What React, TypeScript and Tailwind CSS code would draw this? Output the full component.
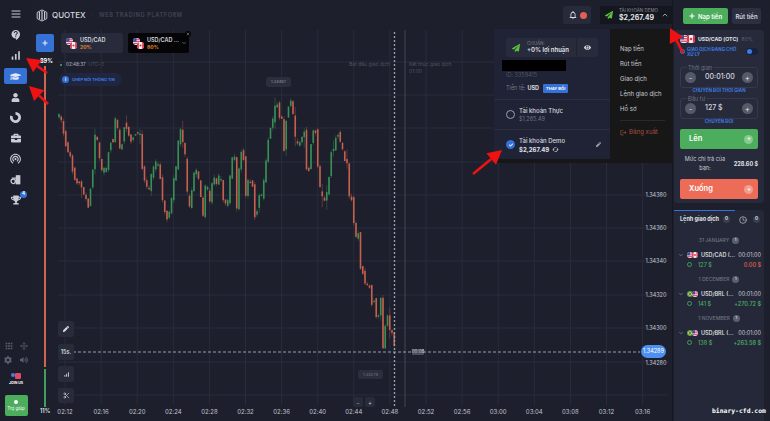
import React from "react";
import { FaGraduationCap, FaUser, FaBriefcase, FaTrophy, FaPen, FaPlus, FaArrowUp, FaArrowDown, FaEye, FaCheck, FaCog, FaVolumeUp, FaPaperPlane } from "react-icons/fa";
import { MdWifiTethering, MdSignalCellularAlt, MdContactSupport, MdOutlineApps, MdCached, MdLogout, MdNotificationsNone } from "react-icons/md";
import { LuChevronUp, LuChevronDown, LuClock, LuX, LuScissors, LuMenu, LuMove } from "react-icons/lu";

const z8: number[][] = [[28,80],[35,115],[45,170],[60,215],[70,265],[80,300],[85,280],[95,310],[110,350],[115,365],[128,255],[135,150],[145,180],[150,240],[160,270],[165,235],[172,270],[178,155],[188,180],[195,100],[205,140],[212,230],[218,150],[225,105],[235,150],[245,170],[255,140],[270,150],[275,240],[285,290],[295,325],[305,265],[320,225],[330,270],[340,370],[350,400],[358,380],[365,340],[372,275],[380,240],[388,125],[398,165],[405,215],[412,330],[420,380],[428,280],[437,250],[445,280],[460,400],[468,270],[478,365],[488,275],[500,295],[510,265],[522,360],[535,350]];
const z9: number[][] = [[15,275],[20,225],[30,215],[35,375],[45,200],[55,205],[60,340],[70,285],[82,295],[92,430],[100,320],[110,335],[118,280],[125,205],[132,150],[140,100],[147,115],[152,35],[165,100],[172,105],[178,215],[185,80],[195,40],[205,90],[213,190],[225,170],[238,140],[245,255],[252,260],[260,140],[272,140],[280,265],[288,340],[302,345],[312,280],[316,195],[328,195],[334,145],[342,145],[350,190],[360,230],[368,230],[373,345],[382,340],[385,400]];
const z10: number[][] = [[48,85],[55,70],[62,180],[70,190],[78,230],[90,230],[95,280],[105,260],[108,320],[118,315],[125,230],[128,425],[138,325],[140,300],[150,365],[158,370],[165,425]];
const pts: number[][] = [
  ...z8.map(([a, b]) => [50 + a / 3, 85 + b / 3]),
  ...z9.map(([a, b]) => [225 + a / 3, 85 + b / 3]),
  ...z10.map(([a, b]) => [340 + a / 3, 210 + b / 3]),
];
function yAt(x: number) {
  if (x <= pts[0][0]) return pts[0][1] + 4;
  for (let i = 0; i < pts.length - 1; i++) {
    if (x >= pts[i][0] && x <= pts[i + 1][0]) {
      const t = (x - pts[i][0]) / (pts[i + 1][0] - pts[i][0] || 1);
      return pts[i][1] + t * (pts[i + 1][1] - pts[i][1]);
    }
  }
  return pts[pts.length - 1][1];
}
const rnd = (i: number) => {
  const s = Math.sin(i * 12.9898) * 43758.5453;
  return s - Math.floor(s);
};
const candles: { x: number; a: number; b: number; hi: number; lo: number; up: boolean }[] = [];
for (let i = 0, x = 59; x <= 395; i++, x += 2.25) {
  const j = x > 380 ? 0 : (rnd(i + 7) - 0.5) * 5;
  const a = yAt(x - 2.25) - j;
  const b = yAt(x) + j;
  const big = rnd(i) > 0.84;
  candles.push({
    x,
    a: Math.min(a, b),
    b: Math.max(Math.max(a, b), Math.min(a, b) + 1.5),
    hi: Math.min(a, b) - rnd(i + 50) * (big ? 10 : 3),
    lo: Math.max(a, b) + rnd(i + 99) * (big ? 11 : 3),
    up: b < a,
  });
}

const times = ["02:12","02:16","02:20","02:24","02:28","02:32","02:36","02:40","02:44","02:48","02:52","02:56","03:00","03:04","03:08","03:12","03:16"];
const prices: [string, number][] = [["1.34380",195],["1.34360",228],["1.34340",261],["1.34320",295],["1.34300",328],["1.34280",363]];

function Flag({ c, s = 8 }: { c: "us" | "ca" | "br"; s?: number }) {
  return (
    <svg width={s} height={s} viewBox="0 0 10 10" className="shrink-0 rounded-[3px]">
      {c === "us" && (
        <>
          <rect width="10" height="10" fill="#eef" />
          <rect y="1" width="10" height="1.5" fill="#d8394b" />
          <rect y="4" width="10" height="1.5" fill="#d8394b" />
          <rect y="7" width="10" height="1.5" fill="#d8394b" />
          <rect width="5" height="5.5" fill="#3e4fa0" />
        </>
      )}
      {c === "ca" && (
        <>
          <rect width="10" height="10" fill="#f4f4f4" />
          <rect width="2.6" height="10" fill="#e0324a" />
          <rect x="7.4" width="2.6" height="10" fill="#e0324a" />
          <circle cx="5" cy="5" r="1.6" fill="#e0324a" />
        </>
      )}
      {c === "br" && (
        <>
          <rect width="10" height="10" fill="#4ba64a" />
          <path d="M5 1.5 9 5 5 8.5 1 5z" fill="#f4d43b" />
          <circle cx="5" cy="5" r="1.7" fill="#33508f" />
        </>
      )}
    </svg>
  );
}

function Pair({ a, b, s = 8 }: { a: "us" | "ca" | "br"; b: "us" | "ca" | "br"; s?: number }) {
  return (
    <span className="flex shrink-0 items-center">
      <Flag c={a} s={s} />
      <span className="-ml-[1px]">
        <Flag c={b} s={s} />
      </span>
    </span>
  );
}

function DiagPair() {
  return (
    <span className="flex shrink-0 items-center">
      <span className="-translate-y-[2px]"><Flag c="us" s={7} /></span>
      <span className="-ml-[3px] translate-y-[2px]"><Flag c="ca" s={7} /></span>
    </span>
  );
}

function SideIcon({ children }: { children: React.ReactNode }) {
  return <div className="flex h-[20.5px] w-[31px] items-center justify-center text-[#c9ccd4]">{children}</div>;
}

function Order({ a, b, name, stake, result, loss }: { a: "us" | "br"; b: "us" | "ca"; name: string; stake: string; result: string; loss?: boolean }) {
  return (
    <div className="flex flex-col gap-[4px] whitespace-nowrap pl-[2px] pr-[1px]">
      <div className="flex items-center text-[5.5px] leading-[6px]">
        <LuChevronDown className="mr-[3px] shrink-0 text-[#9ba0ad]" size={6} />
        <Pair a={a} b={b} s={6} />
        <span className="ml-[3px] font-semibold text-[#d7d9df]">{name}</span>
        <span className="ml-auto text-[#c9ccd4]">00:01:00</span>
      </div>
      <div className="flex items-center pl-[9px] text-[5.5px] leading-[6px]">
        <span className="mr-[6px] flex h-[5px] w-[5px] items-center justify-center rounded-full border border-[#3f9e5e]" />
        <span className="font-medium text-[#49a864]">{stake}</span>
        <span className={`ml-auto font-semibold ${loss ? "text-[#dc5a4a]" : "text-[#49a864]"}`}>{result}</span>
      </div>
    </div>
  );
}

function DateRow({ label }: { label: string }) {
  return (
    <div className="flex h-[6px] items-center justify-center gap-[3px] text-[5px] leading-[6px] text-[#6f7484]">
      <span className="font-medium">{label}</span>
      <span className="flex h-[7px] w-[7px] items-center justify-center rounded-full bg-[#5a5f6f] text-[4px] text-white">1</span>
    </div>
  );
}

function Stepper({ label, value, hint, valueClass }: { label: string; value: string; hint: string; valueClass: string }) {
  return (
    <div className="flex flex-col">
      <div className="relative flex h-[21px] items-center rounded-[3px] border border-[#353949] px-[4px]">
        <span className="absolute -top-[3px] left-[6px] bg-[#262a3b] px-[1px] text-[5.5px] leading-[6px] text-[#6f7484]">{label}</span>
        <span className="flex h-[11px] w-[11px] items-center justify-center rounded-full bg-[#565a68] text-[8px] leading-none text-[#c9ccd4]">-</span>
        <span className={`text-[7px] font-medium text-[#d7d9df] ${valueClass}`}>{value}</span>
        <span className="ml-auto flex h-[11px] w-[11px] items-center justify-center rounded-full bg-[#565a68] text-[8px] leading-none text-[#e3e5ea]">+</span>
      </div>
      <div className="h-[10px] text-center text-[4.5px] font-bold leading-[6px] text-[#3d7be0]">{hint}</div>
    </div>
  );
}

function Arrow({ x1, y1, x2, y2 }: { x1: number; y1: number; x2: number; y2: number }) {
  const ang = Math.atan2(y2 - y1, x2 - x1);
  const L = 14;
  const W = 7.5;
  const bx = x2 - Math.cos(ang) * L;
  const by = y2 - Math.sin(ang) * L;
  const px = -Math.sin(ang) * W;
  const py = Math.cos(ang) * W;
  return (
    <g>
      <line x1={x1} y1={y1} x2={bx} y2={by} stroke="#ee1212" strokeWidth="2.6" />
      <polygon points={`${x2},${y2} ${bx + px},${by + py} ${bx - px},${by - py}`} fill="#ee1212" />
    </g>
  );
}

function Chart() {
  return (
    <svg className="absolute inset-0 h-full w-full" viewBox="32 30 640 391">
      {times.map((_, i) => (
        <line key={i} x1={65 + i * 36.1} x2={65 + i * 36.1} y1={30} y2={405} stroke="#292c3a" strokeWidth="1" />
      ))}
      {[62, 95, 128, 162, 195, 228, 261, 295, 328, 362, 395].map((y) => (
        <line key={y} x1={58} x2={668} y1={y} y2={y} stroke="#292c3a" strokeWidth="1" />
      ))}
      {candles.map((c, i) => (
        <g key={i}>
          <line x1={c.x} x2={c.x} y1={c.hi} y2={c.lo} stroke={c.up ? "#3a8f55" : "#b85a49"} strokeOpacity="0.5" strokeWidth="0.8" />
          <rect x={c.x - 0.8} y={c.a} width="1.6" height={c.b - c.a} fill={c.up ? "#3a8f55" : "#c4604d"} />
        </g>
      ))}
      <line x1="394.5" x2="394.5" y1="28" y2="407" stroke="#9a9da8" strokeWidth="1.4" strokeDasharray="2 2" />
      <line x1="405" x2="405" y1="28" y2="407" stroke="#434653" strokeWidth="1" />
      <line x1="58" x2="640" y1="352" y2="352" stroke="#a8abb5" strokeWidth="0.9" strokeDasharray="3 2" />
      {times.map((t, i) => (
        <text key={t} x={65 + i * 36.1} y={414} textAnchor="middle" fontSize="6" fontFamily="Inter, sans-serif" fill="#c2c5cd">{t}</text>
      ))}
      {prices.map(([p, y]) => (
        <text key={p} x={656} y={y + 2} textAnchor="middle" fontSize="5.5" fontFamily="Inter, sans-serif" fill="#c2c5cd">{p}</text>
      ))}
    </svg>
  );
}

export default function App() {
  return (
    <div className="relative flex h-[421px] w-[770px] overflow-hidden bg-[#1d1f2d] font-['Inter',sans-serif] text-[#d7d9df]">
      {/* sidebar */}
      <aside className="flex w-[32px] shrink-0 flex-col bg-[#1c1e2b] pt-[4px]">
        <SideIcon><LuMenu size={12} /></SideIcon>
        <SideIcon><MdContactSupport size={12} /></SideIcon>
        <SideIcon><MdSignalCellularAlt size={13} /></SideIcon>
        <div className="ml-[4px] mt-[2.5px] flex h-[16px] w-[23px] items-center justify-center rounded-[2px] bg-[#3672d6] text-[#e3e8f5]">
          <FaGraduationCap size={11} />
        </div>
        <div className="h-[3px]" />
        <SideIcon><FaUser size={9} /></SideIcon>
        <SideIcon>
          <svg width="11" height="11" viewBox="0 0 12 12"><path d="M6 1.5a4.5 4.5 0 1 1-4.2 2.9" fill="none" stroke="currentColor" strokeWidth="3" /></svg>
        </SideIcon>
        <SideIcon><FaBriefcase size={10} /></SideIcon>
        <SideIcon><MdWifiTethering size={13} /></SideIcon>
        <SideIcon>
          <svg width="11" height="11" viewBox="0 0 12 12" fill="none" stroke="currentColor" strokeWidth="1.4">
            <circle cx="3.5" cy="8" r="2.4" />
            <rect x="7" y="2" width="3.6" height="8.6" fill="currentColor" />
            <path d="M2 4.5h5" />
          </svg>
        </SideIcon>
        <div className="relative">
          <SideIcon><FaTrophy size={10} /></SideIcon>
          <span className="absolute right-[5px] top-[1px] flex h-[7px] w-[7px] items-center justify-center rounded-full bg-[#3672d6] text-[4.5px] font-bold text-white">4</span>
        </div>
        <div className="mt-auto flex flex-col items-center gap-[5px] pb-[5px]">
          <div className="flex w-[24px] items-center justify-between text-[#5c6070]">
            <MdOutlineApps size={10} />
            <LuMove size={8} />
          </div>
          <div className="flex w-[24px] items-center justify-between text-[#5c6070]">
            <FaCog size={8} />
            <FaVolumeUp size={8} />
          </div>
          <div className="flex flex-col items-center pt-[4px]">
            <span className="flex">
              <span className="h-[4px] w-[4px] rounded-full bg-[#4a7be0]" />
              <span className="h-[6px] w-[6px] rounded-[1px] bg-[#e0486a]" />
            </span>
            <span className="mt-[2px] text-[3.5px] font-bold leading-[4px] text-white">JOIN US</span>
          </div>
          <div className="mt-[5px] flex h-[21px] w-[23px] flex-col items-center justify-center rounded-[2px] bg-[#4cad5c] text-white">
            <span className="h-[4px] w-[4px] rounded-full bg-white" />
            <span className="mt-[2px] text-[4.5px] leading-[5px]">Trợ giúp</span>
          </div>
        </div>
      </aside>

      <div className="flex min-w-0 flex-1 flex-col">
        {/* header */}
        <header className="flex h-[30px] shrink-0 items-center">
          <svg width="12" height="13" viewBox="0 0 14 14" className="ml-[4px] shrink-0" fill="#c9ccd4">
            <path d="M7 0.5 12.6 3.4V10.6L7 13.5 1.4 10.6V3.4Z" fill="none" stroke="#c9ccd4" strokeWidth="1.1" />
            <path d="M4 3v8M7 1.5v11M10 3v8" stroke="#c9ccd4" strokeWidth="1.4" />
          </svg>
          <span className="ml-[4px] text-[8px] font-medium text-[#d7d9df]">QUOTEX</span>
          <span className="ml-[6px] text-[5px] text-[#3d404e]">-</span>
          <span className="ml-[5px] text-[5.5px] font-bold tracking-[0.65px] text-[#3f4250]">WEB TRADING PLATFORM</span>
          <div className="ml-auto flex h-[18px] w-[28px] items-center justify-center gap-[2px] rounded-[2px] bg-[#272a3a]">
            <MdNotificationsNone size={10} />
            <span className="h-[7px] w-[7px] rounded-full bg-[#e2604e]" />
          </div>
          <div className="ml-[9px] flex h-[18px] w-[72px] items-center bg-[#15171f] pl-[5px]">
            <FaPaperPlane size={8} className="text-[#5cc23d]" />
            <div className="ml-[6px] flex flex-col">
              <span className="text-[4.5px] leading-[6px] text-[#8b8f9c]">TÀI KHOẢN DEMO</span>
              <span className="text-[7px] font-bold leading-[8px] text-[#e3e5ea]">$2,267.49</span>
            </div>
            <LuChevronUp size={8} className="ml-auto mr-[3px] text-[#d7d9df]" />
          </div>
        </header>
        {/* chart */}
        <main className="relative min-h-0 flex-1 whitespace-nowrap">
          <Chart />
          <div className="absolute left-[8px] top-[28px] text-[5.5px] font-bold leading-[6px] text-white">89%</div>
          <div className="absolute left-[8px] top-[378px] text-[5.5px] font-bold leading-[6px] text-[#d7d9df]">11%</div>
          <div className="absolute left-[12px] top-[36px] h-[301px] w-[2px] bg-[#cf644f]" />
          <div className="absolute left-[12px] top-[339px] h-[38px] w-[2px] bg-[#3f9e5e]" />
          <div className="absolute left-[4px] top-[4px] flex h-[18px] w-[18px] items-center justify-center rounded-[2px] bg-[#3672d6] text-[#e6ecf8]">
            <FaPlus size={6} />
          </div>
          <div className="absolute left-[29px] top-[3px] flex h-[20px] w-[62px] items-center rounded-[2px] bg-[#282b3c] pl-[5px]">
            <DiagPair />
            <div className="ml-[3px] flex flex-col">
              <span className="text-[5.5px] font-semibold leading-[7px] text-[#d7d9df]">USD/CAD</span>
              <span className="text-[5px] font-bold leading-[6px] text-[#e08a2a]">20%</span>
            </div>
          </div>
          <div className="absolute left-[96px] top-[3px] flex h-[20px] w-[61px] items-center rounded-[2px] bg-[#050507] pl-[5px]">
            <DiagPair />
            <div className="ml-[3px] flex flex-col">
              <span className="text-[5.5px] font-semibold leading-[7px] text-[#d7d9df]">USD/CAD ...</span>
              <span className="text-[5px] font-bold leading-[6px] text-[#e08a2a]">80%</span>
            </div>
            <LuChevronDown size={6} className="ml-[2px] text-[#9ba0ad]" />
            <span className="absolute -right-[2px] -top-[2px] flex h-[6px] w-[6px] items-center justify-center rounded-full bg-[#050507] text-white">
              <LuX size={4} />
            </span>
          </div>
          <div className="absolute left-[28px] top-[32px] flex items-center gap-[3px] text-[4.5px] leading-[6px] text-[#8b8f9c]">
            <span className="h-[2px] w-[2px] rounded-full bg-[#4cad5c]" />
            <span className="ml-[1px] font-medium text-[#a2a6b2]">02:48:37</span>
            <span className="text-[#4f5362]">UTC+3</span>
          </div>
          <div className="absolute left-[27px] top-[43px] flex h-[13px] w-[63px] items-center rounded-full bg-[#20263f] pl-[3px]">
            <span className="flex h-[7px] w-[7px] items-center justify-center rounded-full bg-[#3672d6] text-[4px] font-bold text-white">i</span>
            <span className="ml-[3px] text-[4px] font-bold text-[#3d7be0]">GHÉP NỐI THÔNG TIN</span>
          </div>

          <div className="absolute left-[26px] top-[291px] flex h-[16px] w-[16px] items-center justify-center rounded-[2px] bg-[#282b39] text-[#d7d9df]"><FaPen size={6} /></div>
          <div className="absolute left-[26px] top-[314px] flex h-[16px] w-[16px] items-center justify-center rounded-[2px] bg-[#282b39] text-[5.5px] font-semibold text-[#d7d9df]">15s.</div>
          <div className="absolute left-[26px] top-[336px] flex h-[16px] w-[16px] items-center justify-center rounded-[2px] bg-[#282b39] text-[#d7d9df]"><MdSignalCellularAlt size={7} /></div>
          <div className="absolute left-[26px] top-[358px] flex h-[15px] w-[16px] items-center justify-center rounded-[2px] bg-[#282b39] text-[#d7d9df]"><LuScissors size={7} /></div>

          <div className="absolute left-[234px] top-[47px] flex h-[10px] w-[25px] items-center justify-center rounded-[2px] bg-[#2b2e3d] text-[4px] text-[#9498a5]">1.34497</div>
          <div className="absolute left-[326px] top-[340px] flex h-[9px] w-[25px] items-center justify-center rounded-[2px] bg-[#2b2e3d] text-[4px] text-[#777b89]">1.34279</div>
          <div className="absolute left-[316px] top-[31px] w-[42px] text-right text-[5px] leading-[6px] text-[#4f5362]">Bắt đầu giao dịch</div>
          <div className="absolute left-[377px] top-[31px] text-[5px] leading-[7px] text-[#4f5362]">Kết thúc giao dịch<br />01:00</div>
          <div className="absolute left-[380px] top-[319px] flex h-[6px] w-[12px] items-center justify-center rounded-[1px] bg-[#4a4d5a] text-[4.5px] text-[#c9ccd4]">00:08</div>
          <div className="absolute left-[609px] top-[315px] flex h-[13px] w-[25px] items-center justify-center rounded-full bg-[#4d90f0] text-[5.5px] text-white">1.34289</div>
          <div className="absolute left-[321px] top-[367px] flex h-[10px] w-[10px] items-center justify-center rounded-[2px] bg-[#282b39] text-[6px] text-[#9498a5]">−</div>
          <div className="absolute left-[333px] top-[367px] flex h-[10px] w-[10px] items-center justify-center rounded-[2px] bg-[#282b39] text-[6px] text-[#c9ccd4]">+</div>
        </main>
      </div>

      {/* right column */}
      <aside className="flex w-[98px] shrink-0 flex-col border-l border-[#141620] pl-[1px] pr-[6px] pt-[8px]">
        <div className="flex h-[16px] shrink-0 gap-[4px] pl-[9px] pr-[3px]">
          <div className="flex w-[45px] items-center justify-center gap-[3px] rounded-[2px] bg-[#4cad5c] text-[6px] font-semibold text-white">
            <FaPlus size={6} />
            <span>Nạp tiền</span>
          </div>
          <div className="flex flex-1 items-center justify-center rounded-[2px] bg-[#2c2f40] text-[6px] font-semibold text-[#d7d9df]">Rút tiền</div>
        </div>
        <div className="mt-[6px] flex h-[173px] shrink-0 flex-col rounded-[3px] bg-[#262a3b] px-[6px] pt-[5px]">
          <div className="flex h-[8px] items-center whitespace-nowrap text-[5.2px] leading-[7px]">
            <Pair a="us" b="ca" s={8} />
            <span className="ml-[3px] font-bold text-[#e0e2e7]">USD/CAD (OTC)</span>
            <span className="ml-[3px] text-[#5d6170]">80%</span>
          </div>
          <div className="mt-[3px] flex h-[11px] items-center">
            <span className="mr-[2px] h-[5px] w-[5px] shrink-0 rounded-full border border-[#3d7be0]" />
            <span className="w-[56px] text-[4.5px] font-bold leading-[5px] text-[#3d7be0]">GIAO DỊCH ĐANG CHỜ XỬ LÝ</span>
            <span className="ml-auto flex h-[7px] w-[12px] items-center rounded-full bg-[#182040] pl-[0.5px]">
              <span className="h-[5px] w-[5px] rounded-full bg-[#3d7be0]" />
            </span>
          </div>
          <div className="mt-[10px] flex flex-col">
            <Stepper label="Thời gian" value="00:01:00" hint="CHUYỂN ĐỔI THỜI GIAN" valueClass="ml-[9px]" />
            <Stepper label="Đầu tư" value="127 $" hint="CHUYỂN ĐỔI" valueClass="ml-[9px]" />
          </div>
          <div className="flex h-[20px] shrink-0 items-center justify-between rounded-[2px] bg-[#4cad5c] pl-[9px] pr-[5px] text-[7.5px] font-semibold text-white">
            <span>Lên</span>
            <span className="flex h-[9px] w-[9px] items-center justify-center rounded-full bg-[#86c991]"><FaArrowUp size={4} /></span>
          </div>
          <div className="flex h-[30px] shrink-0 items-center justify-between text-[5.5px] leading-[9px]">
            <span className="w-[50px] text-center text-[#c9ccd4]">Mức chi trả của bạn:</span>
            <span className="whitespace-nowrap font-bold text-[#e0e2e7]">228.60 $</span>
          </div>
          <div className="flex h-[20px] shrink-0 items-center justify-between rounded-[2px] bg-[#ec6c58] pl-[9px] pr-[5px] text-[7.5px] font-semibold text-white">
            <span>Xuống</span>
            <span className="flex h-[9px] w-[9px] items-center justify-center rounded-full bg-[#f19c8d]"><FaArrowDown size={4} /></span>
          </div>
        </div>
        <div className="mt-[7px] flex min-h-0 flex-1 flex-col rounded-t-[3px] bg-[#242838]">
          <div className="h-[1px] w-[61px] bg-[#3672d6]" />
          <div className="flex h-[17px] items-center whitespace-nowrap pl-[6px] pr-[4px] text-[5.5px] font-bold">
            <span className="text-[#e0e2e7]">Lệnh giao dịch</span>
            <span className="ml-[4px] flex h-[7px] w-[7px] items-center justify-center rounded-full bg-[#3a3e4e] text-[4.5px]">0</span>
            <LuClock size={8} className="ml-auto text-[#c9ccd4]" />
            <span className="ml-[6px] flex h-[7px] w-[7px] items-center justify-center rounded-full bg-[#3a3e4e] text-[4.5px]">0</span>
          </div>
          <div className="mt-[9px] flex flex-col gap-[8.5px] px-[2px]">
            <DateRow label="31 JANUARY" />
            <Order a="us" b="ca" name="USD/CAD (..." stake="127 $" result="0.00 $" loss />
            <DateRow label="1 DECEMBER" />
            <Order a="br" b="us" name="USD/BRL (..." stake="141 $" result="+270.72 $" />
            <DateRow label="1 NOVEMBER" />
            <Order a="br" b="us" name="USD/BRL (..." stake="138 $" result="+263.58 $" />
          </div>
        </div>
      </aside>

      {/* account dropdown */}
      <div className="absolute left-[494px] top-[29px] flex h-[134px] w-[179px] whitespace-nowrap bg-[#171717]">
        <div className="mb-[4px] flex w-[116px] flex-col bg-[#1f2335]">
          <div className="mx-[12px] mt-[9px] flex h-[19px] shrink-0 gap-[1px]">
            <div className="flex flex-1 items-center rounded-l-[2px] bg-[#272b3c] pl-[6px]">
              <FaPaperPlane size={8} className="text-[#5cc23d]" />
              <div className="ml-[7px] flex flex-col">
                <span className="text-[4.5px] leading-[5px] text-[#7a7e8c]">CHUẨN:</span>
                <span className="text-[6px] font-semibold leading-[8px] text-[#e0e2e7]">+0% lợi nhuận</span>
              </div>
            </div>
            <div className="flex w-[21px] items-center justify-center rounded-r-[2px] bg-[#272b3c] text-[#d7d9df]"><FaEye size={7} /></div>
          </div>
          <div className="ml-[8px] mt-[3px] h-[11px] w-[64px] shrink-0 bg-black" />
          <div className="ml-[12px] text-[5.5px] leading-[8px] text-[#4f5362]">ID: 3359415</div>
          <div className="ml-[12px] mt-[5px] flex h-[9px] shrink-0 items-center text-[5.5px] text-[#6f7484]">
            <span>Tiền tệ:</span>
            <span className="ml-[2px] font-bold text-[#d7d9df]">USD</span>
            <span className="ml-[4px] flex h-[9px] items-center rounded-[1px] bg-[#3672d6] px-[3px] text-[4px] font-bold text-white">THAY ĐỔI</span>
          </div>
          <div className="mt-[6px] flex h-[30px] shrink-0 items-center border-t border-[#2a2e40] pl-[12px]">
            <span className="h-[9px] w-[9px] rounded-full border border-[#9ba0ad]" />
            <div className="ml-[4px] flex flex-col">
              <span className="text-[6px] font-medium leading-[9px] text-[#d7d9df]">Tài khoản Thực</span>
              <span className="text-[5.5px] leading-[9px] text-[#6f7484]">$1,265.49</span>
            </div>
          </div>
          <div className="flex h-[30px] shrink-0 items-center border-t border-[#2a2e40] pl-[12px]">
            <span className="flex h-[9px] w-[9px] items-center justify-center rounded-full bg-[#3672d6] text-white"><FaCheck size={4} /></span>
            <div className="ml-[4px] flex flex-col">
              <span className="text-[6px] font-medium leading-[9px] text-[#d7d9df]">Tài khoản Demo</span>
              <span className="flex items-center text-[6px] font-bold leading-[9px] text-[#e0e2e7]">$2,267.49<MdCached size={7} className="ml-[3px]" /></span>
            </div>
            <FaPen size={5} className="ml-auto mr-[9px] text-[#9ba0ad]" />
          </div>
        </div>
        <div className="flex flex-1 flex-col gap-[7px] pl-[10px] pt-[16px] text-[6px] leading-[8px] text-[#c9ccd4]">
          <span>Nạp tiền</span>
          <span>Rút tiền</span>
          <span>Giao dịch</span>
          <span>Lệnh giao dịch</span>
          <span>Hồ sơ</span>
          <span className="mr-[8px] h-[1px] bg-[#2a2a2a]" />
          <span className="flex items-center gap-[2px] text-[#a8503f]"><MdLogout size={7} />Đăng xuất</span>
        </div>
      </div>

      {/* red annotation arrows */}
      <svg className="pointer-events-none absolute inset-0 h-full w-full" viewBox="0 0 770 421">
        <Arrow x1={47} y1={73} x2={26} y2={58} />
        <Arrow x1={48} y1={104} x2={29} y2={86} />
        <Arrow x1={683} y1={53} x2={670} y2={28} />
        <Arrow x1={473} y1={174} x2={502} y2={150} />
      </svg>

      <span className="absolute left-[712px] top-[406px] whitespace-nowrap font-['DejaVu_Sans_Mono',monospace] text-[6.4px] font-bold leading-[10px] text-white">binary-cfd.com</span>
    </div>
  );
}
